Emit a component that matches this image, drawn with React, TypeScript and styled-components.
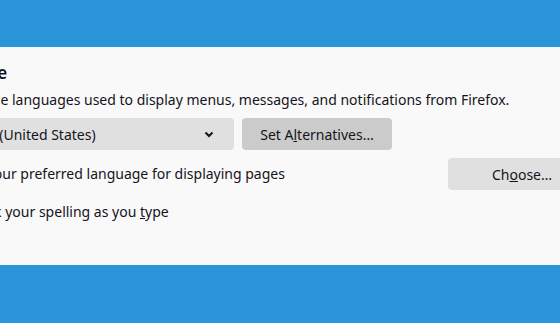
import styled, { createGlobalStyle } from 'styled-components';

const GlobalStyle = createGlobalStyle`
  html, body {
    margin: 0;
    padding: 0;
  }

  body {
    background: #2b95d9;
    font-family: 'Noto Sans', 'Open Sans', sans-serif;
    color: #15141a;
  }
`;

const Page = styled.div`
  height: 323px;
  padding: 47px 0 58px;
  box-sizing: border-box;
  overflow: hidden;
`;

const Panel = styled.section`
  height: 218px;
  background: #f9f9f9;
  overflow: hidden;
`;

// the screenshot is a crop, so the content starts left of the window
const Content = styled.div`
  width: 662px;
  margin-left: -66px;
  padding-top: 14px;
`;

const Heading = styled.h2`
  margin: 0 0 0 -11px;
  font-size: 17px;
  font-weight: 600;
  letter-spacing: 0.3px;
  line-height: 23px;
`;

const Description = styled.p`
  margin: 6px 0 0;
  font-size: 14px;
  line-height: 20px;
`;

const Row = styled.div<{ $top: number }>`
  display: flex;
  align-items: center;
  gap: 8px;
  margin-top: ${(p) => p.$top}px;
  font-size: 14px;
`;

const Select = styled.div`
  display: flex;
  align-items: center;
  justify-content: space-between;
  width: 300px;
  height: 32px;
  padding: 0 20px 0 14px;
  box-sizing: border-box;
  background: #e0e0e0;
  border-radius: 4px;
`;

const Button = styled.button<{ $hover?: boolean; $width: number }>`
  width: ${(p) => p.$width}px;
  height: 32px;
  border: none;
  border-radius: 4px;
  background: ${(p) => (p.$hover ? '#cbcbcb' : '#e0e0e0')};
  color: #15141a;
  font: inherit;
  font-size: 14px;
  padding: 0;
`;

const Label = styled.span`
  flex: 1;
  line-height: 20px;
`;

const Checkbox = styled.span`
  width: 16px;
  height: 16px;
  margin-left: 4px;
  border: 1px solid #8f8f9d;
  border-radius: 2px;
  box-sizing: border-box;
`;

const Chevron = () => (
  <svg width="10" height="7" viewBox="0 0 10 7">
    <path d="M1.5 1.5 L5 5 L8.5 1.5" fill="none" stroke="#15141a" strokeWidth="2" />
  </svg>
);

const App = () => (
  <>
    <GlobalStyle />
    <Page>
      <Panel>
        <Content>
          <Heading>Language</Heading>
          <Description>
            Choose the languages used to display menus, messages, and notifications from Firefox.
          </Description>
          <Row $top={8}>
            <Select>
              <span>English (United States)</span>
              <Chevron />
            </Select>
            <Button $hover $width={150}>
              Set A<u>l</u>ternatives…
            </Button>
          </Row>
          <Row $top={8}>
            <Label>Choose your preferred language for displaying pages</Label>
            <Button $width={148}>
              Ch<u>o</u>ose…
            </Button>
          </Row>
          <Row $top={12}>
            <Checkbox />
            <Label>
              Check your spelling as you <u>t</u>ype
            </Label>
          </Row>
        </Content>
      </Panel>
    </Page>
  </>
);

export default App;
